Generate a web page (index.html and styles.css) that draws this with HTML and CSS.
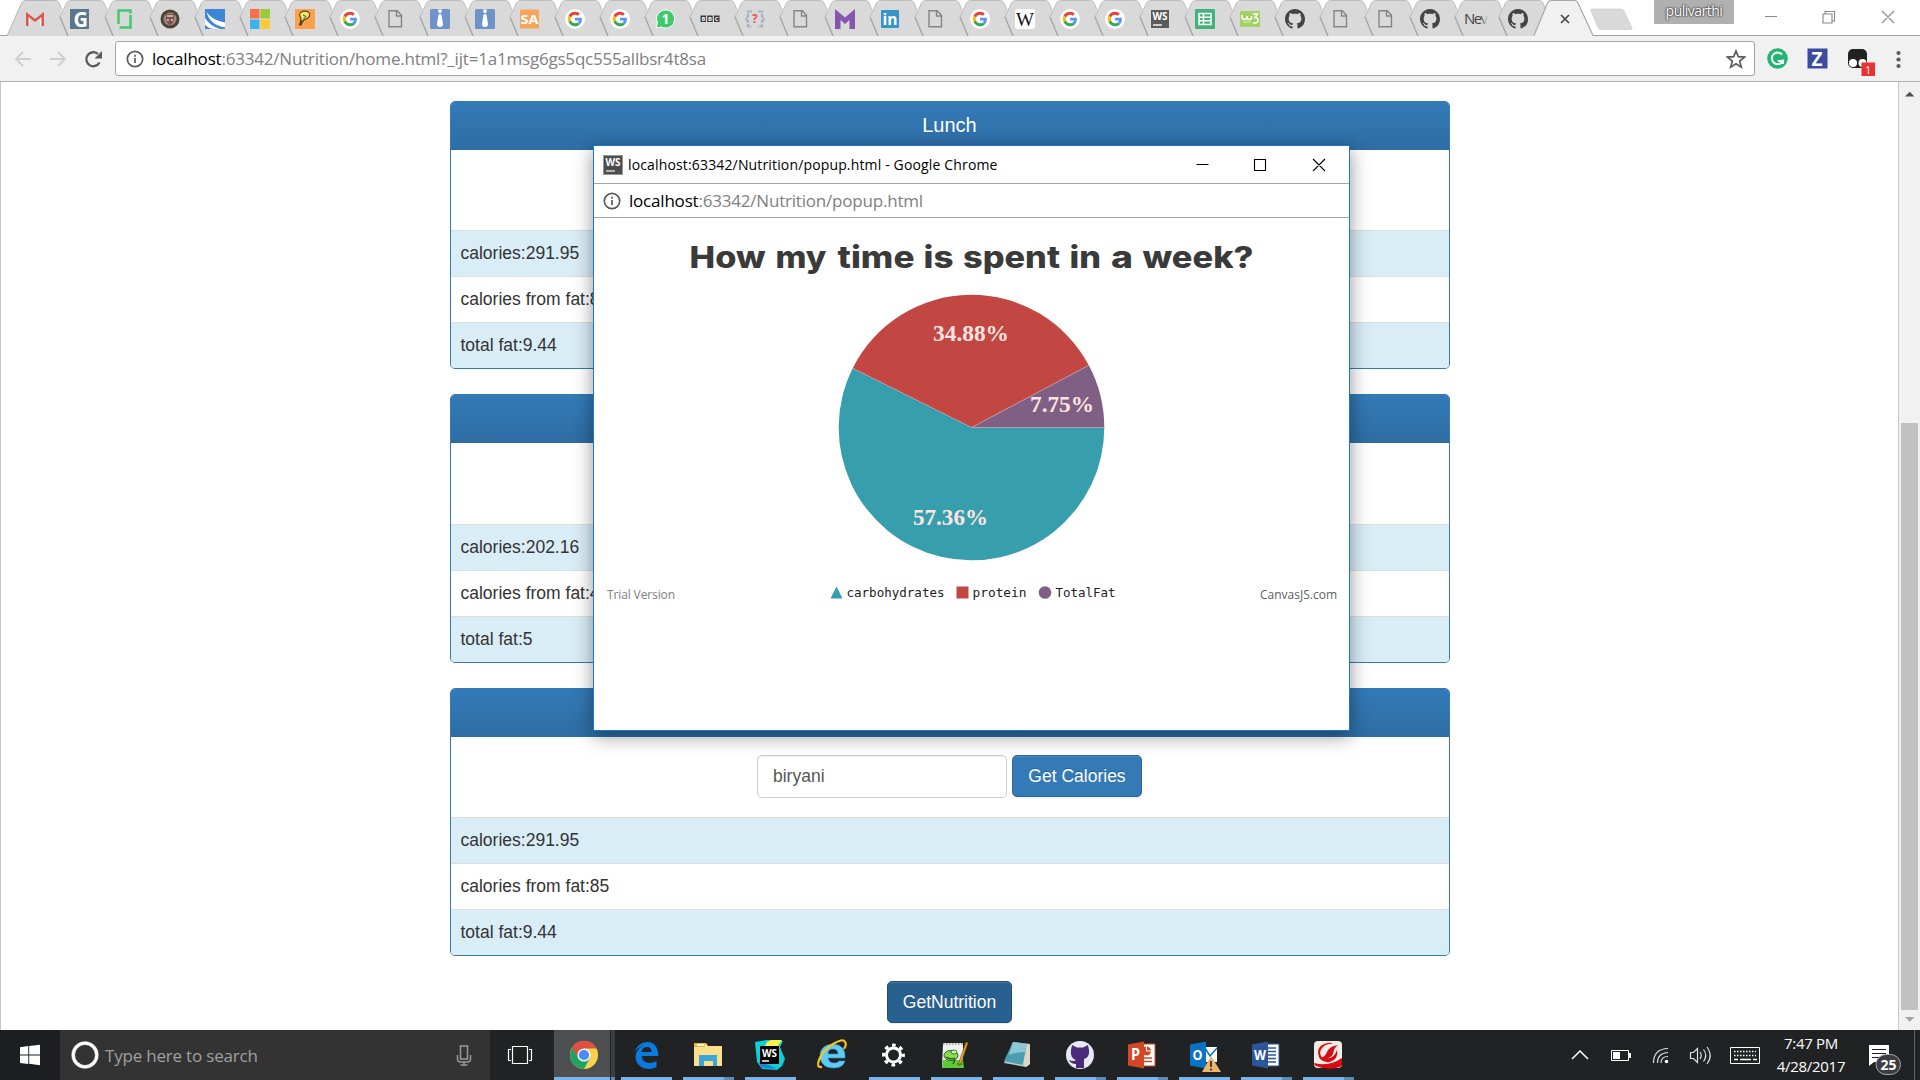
FILE: index.html
```html
<!DOCTYPE html>
<html lang="en">
<head>
<meta charset="utf-8">
<title>Nutrition</title>
<link rel="stylesheet" href="styles.css">
</head>
<body>
<svg class="defs" aria-hidden="true">
  <symbol id="tab" viewBox="0 0 62 36"><path d="M16 36 8 17 14.500 3Q16 .5 18.500.5H48.500Q51 .5 52 3L67 37" fill="#d9d9d9"/><path d="M16 36 8 17" fill="none" stroke="#a3a3a3" stroke-width="1.300"/><path d="M8 17 14.500 3Q16 .5 18.500.5H48.500Q51 .5 52 3L55 10" fill="none" stroke="#bdbdbd"/></symbol>
  <symbol id="tab-first" viewBox="0 0 62 36"><path d="M0 36 14.500 3Q16 .5 18.500.5H48.500Q51 .5 52 3L62 36" fill="#d9d9d9"/><path d="M0 36 14.500 3Q16 .5 18.500.5H48.500Q51 .5 52 3L55 10" fill="none" stroke="#b5b5b5"/></symbol>
  <symbol id="google" viewBox="0 0 20 20"><circle cx="10" cy="10" r="10" fill="#fff"/><g transform="translate(2.800 2.800) scale(.3)"><path fill="#ea4335" d="M24 9.500c3.540 0 6.710 1.220 9.210 3.600l6.850-6.850C35.900 2.380 30.470 0 24 0 14.620 0 6.510 5.380 2.560 13.220l7.980 6.190C12.430 13.720 17.740 9.500 24 9.500z"/><path fill="#5a96f5" d="M46.980 24.550c0-1.570-.15-3.090-.38-4.550H24v9.020h12.940c-.58 2.960-2.260 5.480-4.780 7.180l7.730 6c4.510-4.180 7.090-10.360 7.090-17.650z"/><path fill="#fbbc05" d="M10.530 28.590c-.48-1.450-.76-2.990-.76-4.590s.27-3.140.76-4.590l-7.980-6.190C.92 16.460 0 20.120 0 24c0 3.880.92 7.540 2.560 10.780l7.970-6.190z"/><path fill="#34a853" d="M24 48c6.480 0 11.930-2.130 15.890-5.810l-7.730-6c-2.150 1.450-4.920 2.300-8.160 2.300-6.260 0-11.570-4.220-13.470-9.910l-7.980 6.190C6.510 42.620 14.620 48 24 48z"/></g></symbol>
  <symbol id="octocat" viewBox="0 0 16 16"><path d="M8 0C3.580 0 0 3.580 0 8c0 3.540 2.290 6.530 5.470 7.590.4.07.55-.17.55-.38 0-.19-.01-.82-.01-1.490-2.010.37-2.530-.49-2.690-.94-.09-.23-.48-.94-.82-1.130-.28-.15-.68-.52-.01-.53.63-.01 1.080.58 1.230.82.72 1.210 1.870.87 2.330.66.07-.52.28-.87.51-1.070-1.780-.2-3.640-.89-3.640-3.950 0-.87.31-1.590.82-2.150-.08-.2-.36-1.020.08-2.120 0 0 .67-.21 2.200.82.64-.18 1.320-.27 2-.27s1.360.09 2 .27c1.530-1.040 2.200-.82 2.200-.82.44 1.100.16 1.920.08 2.120.51.56.82 1.270.82 2.150 0 3.070-1.870 3.750-3.650 3.950.29.25.54.73.54 1.480 0 1.070-.01 1.930-.01 2.200 0 .21.15.46.55.38A8.010 8.010 0 0 0 16 8c0-4.420-3.580-8-8-8z" fill="#444"/></symbol>
  <symbol id="page" viewBox="0 0 20 20"><path d="M4 1.700h8.200l4.300 4.500v11.600H4zM11.500 2v5H16.500" fill="none" stroke="#858585" stroke-width="1.400"/></symbol>
  <symbol id="tie" viewBox="0 0 20 20"><rect width="20" height="20" rx="1.500" fill="#6f93c9"/><path d="M8 .5h4L11.200 4H8.800zM8.600 5.200h2.800L13 15q0 3-3 3t-3-3z" fill="#fff"/></symbol>
  <symbol id="info" viewBox="0 0 18 18"><circle cx="9" cy="9" r="7.700" fill="none" stroke="#5a5a5a" stroke-width="1.700"/><path d="M9 8v5M9 4.700v2" stroke="#5a5a5a" stroke-width="1.700"/></symbol>
</svg>

<header class="tabstrip">
  <div class="tabs">
    <svg class="tab"><use href="#tab-first" width="62" height="36"/><path d="M19 13.500v12h4v-8l5 4 5-4v8h4v-12l-9 7z" fill="#f7f7f7"/><path d="M20.300 26V14.500l7.700 6 7.700-6V26" fill="none" stroke="#dc564a" stroke-width="2.500"/></svg>
    <svg class="tab"><use href="#tab" width="62" height="36"/><rect x="18" y="9" width="19" height="20" fill="#5b778d"/><text x="21.500" y="26.500" class="logo" font-size="21" textLength="14.500" lengthAdjust="spacingAndGlyphs" fill="#fff">G</text></svg>
    <svg class="tab"><use href="#tab" width="62" height="36"/><path d="M27 10.500h-5.500V24M22.500 27.500h11V15M27 10.500h6.500v3" fill="none" stroke="#46c972" stroke-width="2.600"/></svg>
    <svg class="tab"><use href="#tab" width="62" height="36"/><circle cx="28" cy="19" r="9.500" fill="#4b4335"/><circle cx="28" cy="19" r="6.500" fill="#9b8c77"/><path d="M24 14h8v5q-1 5-4 6-3-1-4-6z" fill="#884b48"/><path d="M25 16h6M25 20h2m2 0h2" stroke="#c8d5de" stroke-width="1.500"/></svg>
    <svg class="tab"><use href="#tab" width="62" height="36"/><rect x="18" y="9" width="20" height="20" fill="#3c86d6"/><path d="M19.500 12q6 8.500 18.500 10.500v5Q23 25 19.500 12zM18 18q5 8 15 11H26q-5-1-8-4z" fill="#fff"/></svg>
    <svg class="tab"><use href="#tab" width="62" height="36"/><path d="M18 9h9.500v9.500H18z" fill="#f8704b"/><path d="M28.500 9H38v9.500h-9.500z" fill="#9ac93a"/><path d="M18 19.500h9.500V29H18z" fill="#3ab4ef"/><path d="M28.500 19.500H38V29h-9.500z" fill="#fdc934"/></svg>
    <svg class="tab"><use href="#tab" width="62" height="36"/><rect x="18" y="9" width="20" height="20" fill="#faa14a"/><path d="M23.500 12.500q4-2.500 8-.5 2.500 3-.5 6l-4 2-1 1.500-2.500-1.500.5-2q-2.500-3-.5-5.500z" fill="#f5e769" stroke="#4d4128" stroke-width="1.100"/><path d="m26 15 3 1.500-3 3" fill="none" stroke="#4d4128"/><path d="m23.200 20.500 2.800 1.500-2 4-2-1z" fill="#4d4128"/></svg>
    <svg class="tab"><use href="#tab" width="62" height="36"/><use href="#google" x="18" y="9" width="20" height="20"/></svg>
    <svg class="tab"><use href="#tab" width="62" height="36"/><use href="#page" x="18" y="9" width="20" height="20"/></svg>
    <svg class="tab"><use href="#tab" width="62" height="36"/><use href="#tie" x="18" y="9" width="20" height="20"/></svg>
    <svg class="tab"><use href="#tab" width="62" height="36"/><use href="#tie" x="18" y="9" width="20" height="20"/></svg>
    <svg class="tab"><use href="#tab" width="62" height="36"/><rect x="18" y="9.500" width="19" height="19" fill="#f6a65c"/><text x="18.500" y="24" class="logo" font-size="13" textLength="18" lengthAdjust="spacingAndGlyphs" fill="#fff">SA</text></svg>
    <svg class="tab"><use href="#tab" width="62" height="36"/><use href="#google" x="18" y="9" width="20" height="20"/></svg>
    <svg class="tab"><use href="#tab" width="62" height="36"/><use href="#google" x="18" y="9" width="20" height="20"/></svg>
    <svg class="tab"><use href="#tab" width="62" height="36"/><path d="M28.500 10a9 9 0 1 1-4 17l-5.500 1 1.500-5a9 9 0 0 1 8-13z" fill="#3dcb67" stroke="#fff"/><text x="24.500" y="24" class="logo" font-size="14" fill="#fff">1</text></svg>
    <svg class="tab"><use href="#tab" width="62" height="36"/><path d="M18.500 15.500h5.500v6.500h-5.500zM25.200 15.500h5.500v6.500h-5.500zM32 15.500h5.500v6.500H32z" fill="#383838"/><text x="19.500" y="21" font-size="6" textLength="17" class="logo" fill="#fff">BBC</text></svg>
    <svg class="tab"><use href="#tab" width="62" height="36"/><path d="M25 11.500h-4v5l-2 2.500 2 2.500v5h4M31 11.500h4v5l2 2.500-2 2.500v5h-4" fill="none" stroke="#a6b3c1" stroke-width="2.200" stroke-dasharray="5 1"/><text x="25" y="23" font-size="12" class="logo" fill="#f05050">?</text></svg>
    <svg class="tab"><use href="#tab" width="62" height="36"/><use href="#page" x="18" y="9" width="20" height="20"/></svg>
    <svg class="tab"><use href="#tab" width="62" height="36"/><path d="m18 9 10 8.500L38 9v20h-5.500V20L28 24l-4.500-4v9H18z" fill="#8655ad"/></svg>
    <svg class="tab"><use href="#tab" width="62" height="36"/><rect x="19" y="10" width="18" height="18" rx="1" fill="#3595c8"/><text x="20.500" y="25" font-size="16" class="logo" textLength="15" lengthAdjust="spacingAndGlyphs" fill="#fff">in</text></svg>
    <svg class="tab"><use href="#tab" width="62" height="36"/><use href="#page" x="18" y="9" width="20" height="20"/></svg>
    <svg class="tab"><use href="#tab" width="62" height="36"/><use href="#google" x="18" y="9" width="20" height="20"/></svg>
    <svg class="tab"><use href="#tab" width="62" height="36"/><rect x="18" y="9" width="20" height="20" rx="3" fill="#fff"/><text x="19" y="25.500" font-family="Liberation Serif, serif" font-size="18" textLength="18" lengthAdjust="spacingAndGlyphs" fill="#111">W</text></svg>
    <svg class="tab"><use href="#tab" width="62" height="36"/><use href="#google" x="18" y="9" width="20" height="20"/></svg>
    <svg class="tab"><use href="#tab" width="62" height="36"/><use href="#google" x="18" y="9" width="20" height="20"/></svg>
    <svg class="tab"><use href="#tab" width="62" height="36"/><rect x="19" y="10" width="18" height="18" fill="#5b5b5b"/><text x="20.500" y="20" textLength="15" lengthAdjust="spacingAndGlyphs" class="logo" font-size="11" fill="#fff">WS</text><path d="M21 25h9" stroke="#fff" stroke-width="1.400"/></svg>
    <svg class="tab"><use href="#tab" width="62" height="36"/><rect x="18" y="9" width="20" height="20" rx="1" fill="#42b27c"/><path d="M22 13.500h12v11H22zM22 17.200h12M22 20.800h12M26.500 13.500v11" fill="none" stroke="#fff" stroke-width="1.500"/></svg>
    <svg class="tab"><use href="#tab" width="62" height="36"/><rect x="18" y="11" width="20" height="16" rx="1" fill="#a2d263"/><path d="M20 15v2q0 2.500 2.500 2.500T25 17v-1 1q0 2.500 2.500 2.500T29.500 16M31 14h4.500l-2.500 3.500q3 0 3 3t-5 2.500" fill="none" stroke="#fff" stroke-width="1.500"/><path d="M21 22h8" stroke="#d8efbc"/></svg>
    <svg class="tab"><use href="#tab" width="62" height="36"/><use href="#octocat" x="18" y="9" width="20" height="20"/></svg>
    <svg class="tab"><use href="#tab" width="62" height="36"/><use href="#page" x="18" y="9" width="20" height="20"/></svg>
    <svg class="tab"><use href="#tab" width="62" height="36"/><use href="#page" x="18" y="9" width="20" height="20"/></svg>
    <svg class="tab"><use href="#tab" width="62" height="36"/><use href="#octocat" x="18" y="9" width="20" height="20"/></svg>
    <svg class="tab narrow"><linearGradient id="fade"><stop offset=".65" stop-color="#444"/><stop offset="1" stop-color="#444" stop-opacity="0"/></linearGradient><use href="#tab" width="62" height="36"/><text x="17" y="24" class="ui" font-size="15" textLength="24" fill="url(#fade)">Nev</text></svg>
    <svg class="tab narrow"><use href="#tab" width="62" height="36"/><use href="#octocat" x="17" y="9" width="20" height="20"/></svg>
    <svg class="tab active"><path d="M0 36 13.500 3Q15 .5 17 .5H40Q43 .5 44 3L59 36" fill="#f1f1f1"/><path d="M0 35.500 13.500 3Q15 .5 17 .5H40Q43 .5 44 3L59 35.500" fill="none" stroke="#a8a8a8" stroke-width="1.200"/><path d="m27 15 8 8m0-8-8 8" stroke="#444" stroke-width="1.700"/></svg>
    <svg class="newtab"><path d="M1 9h28q3 0 4 2l8 17q.5 1.500-1.500 1.500H11q-3 0-4-2L0 11Q-.5 9 1 9z" fill="#d9d9d9" stroke="#ccc" stroke-width=".7"/></svg>
  </div>
  <div class="profile">pulivarthi</div>
  <svg class="winctl" width="186" height="36"><path d="M31 16.500h12M89 14h9v9h-9zM91 14v-2.500h9.500V21H98M148 11l12 12m0-12-12 12" fill="none" stroke="#888" stroke-width="1.100"/></svg>
</header>

<nav class="toolbar">
  <svg class="navicons" width="115" height="45"><path d="M31 23H16m7-7-7 7 7 7M50 23h15m-7-7 7 7-7 7" fill="none" stroke="#cfcfcf" stroke-width="1.900"/><path d="M99.500 26.500a7 7 0 1 1-1.500-8.500" fill="none" stroke="#5a5a5a" stroke-width="2.300"/><path d="M102 15v7.500h-7.500z" fill="#5a5a5a"/></svg>
  <div class="omnibox">
    <svg width="18" height="18"><use href="#info"/></svg>
    <span class="address">localhost<i>:63342/Nutrition/home.html?_ijt=1a1msg6gs5qc555allbsr4t8sa</i></span>
    <svg width="20" height="20"><path d="m10 2 2.300 5.700 6.200.4-4.800 4 1.600 6-5.300-3.400-5.300 3.400 1.600-6-4.800-4 6.200-.4z" fill="none" stroke="#5a5a5a" stroke-width="1.700"/></svg>
  </div>
  <svg class="extensions" width="165" height="45"><circle cx="22.500" cy="22.500" r="10.300" fill="#23b574"/><path d="M27 18.500a5.800 5.800 0 1 0 .8 6.500h-5m5.200-1.500V28" fill="none" stroke="#fff" stroke-width="1.900"/><rect x="52.500" y="12.500" width="20" height="20" fill="#3c4b9e"/><text x="56.500" y="29.500" class="logo" font-size="19" fill="#fff">Z</text><rect x="93" y="13" width="19" height="19" rx="5" fill="#222"/><circle cx="98" cy="27" r="4" fill="#fff"/><circle cx="107.500" cy="27" r="4" fill="#fff"/><rect x="106.500" y="26.500" width="13.500" height="13.500" fill="#ee3030"/><text x="110" y="38" font-size="11" class="ui" fill="#fff">1</text><g fill="#5a5a5a"><circle cx="143.500" cy="17" r="2.100"/><circle cx="143.500" cy="23.500" r="2.100"/><circle cx="143.500" cy="30" r="2.100"/></g></svg>
</nav>

<div class="viewport">
  <main class="page">
    <section class="panel">
      <h3 class="panel-heading">Lunch</h3>
      <div class="panel-body"></div>
      <ul class="facts"><li>calories:291.95</li><li>calories from fat:85</li><li>total fat:9.44</li></ul>
    </section>
    <section class="panel panel-tall">
      <h3 class="panel-heading"></h3>
      <div class="panel-body"></div>
      <ul class="facts"><li>calories:202.16</li><li>calories from fat:45</li><li>total fat:5</li></ul>
    </section>
    <section class="panel">
      <h3 class="panel-heading"></h3>
      <div class="panel-body"><input class="food" type="text" value="biryani"><button class="btn">Get Calories</button></div>
      <ul class="facts"><li>calories:291.95</li><li>calories from fat:85</li><li>total fat:9.44</li></ul>
    </section>
    <button class="btn btn-active">GetNutrition</button>
  </main>
  <div class="scrollbar">
    <svg width="21" height="26"><path d="m6 14.500 4.700-4.800 4.700 4.800z" fill="#505050"/></svg>
    <div class="thumb"></div>
    <svg width="21" height="20"><path d="m6 7 4.700 4.800L15.400 7z" fill="#a3a3a3"/></svg>
  </div>
</div>

<footer class="taskbar">
  <svg class="start" width="60" height="50"><path d="m20 17.200 8.300-1.200v8.500H20zM29.200 15.900 40 14.800v9.700H29.200zM20 25.500h8.300V34L20 32.900zM29.200 25.500H40v9.800l-10.800-1.500z" fill="#fff"/></svg>
  <div class="search">
    <svg width="28" height="28"><circle cx="14" cy="14" r="11.800" fill="none" stroke="#aaa" stroke-width="3.800"/><circle cx="14" cy="14" r="11.800" fill="none" stroke="#fff" stroke-width="2.800"/></svg>
    <span class="hint">Type here to search</span>
    <svg width="16" height="22"><path d="M4.500 2h7v13h-7zM1.500 11v4q0 3 3 3h7q3 0 3-3v-4M8 18v3M4.500 21h7" fill="none" stroke="#999" stroke-width="1.500"/></svg>
  </div>
  <svg class="taskview" width="64" height="50"><path d="M22.500 16.500h15v17h-15zM21 19.500h-2.500v11H21M39 19.500h2.500v11H39" fill="none" stroke="#fff" stroke-width="1.200"/></svg>
  <div class="apps">
    <svg class="app current" viewBox="0 0 61 50"><path d="M0 0h56v50H0z" fill="#4d4f51"/><path d="M57 0h4v50h-4z" fill="#3b3d3f"/><path d="M0 47h56v3H0z" fill="#76b5ee"/><path d="M57 47h4v3h-4z" fill="#5b8dba"/><g transform="translate(30 25)"><circle r="14" fill="#fcd14e"/><path d="M0 0-12.100-7A14 14 0 0 0 0 14L6 3z" fill="#1da362"/><path d="M0-6.500H12.600A14 14 0 0 0-12.100-7L-5.500 3z" fill="#dd5144"/><circle r="6.600" fill="#f3f3f3"/><circle r="5.100" fill="#4c8bf5"/></g></svg>
    <svg class="app" viewBox="0 0 51 50"><path d="M1 24Q5 12 15 12T26 26H9q1 7 8 7 4 0 7-2v6q-4 2-8 2-12-1-13-12 0-8 8-11-8 2-10 8zM9 22h10q0-5-4.500-5T9 22z" transform="translate(11.500)" fill="#0a7bdc"/><path class="run" d="M0 47h51v3H0z"/></svg>
    <svg class="app" viewBox="0 0 51 50"><path d="M11 13h12l2 3h14v20H11z" fill="#fbdf8b"/><path d="M11 13h12l-2 4H11z" fill="#e8b43a"/><path d="M14 14.200h7v1.600h-7z" fill="#fff"/><path d="M16 25h18v11h-4v-5h-9v5h-5z" fill="#3aa7dc"/><path class="run" d="M0 47h41v3H0z"/><path class="more" d="M41 47h10v3H41z"/></svg>
    <svg class="app" viewBox="0 0 51 50"><path d="m10 12 12-2 16 1-3 6 5 12-3 7-5 4-15-1-5-7z" fill="#0ed0d8"/><path d="m22 12 4-2h11l-4 6H20z" fill="#f5f34b"/><path d="m14 32 10 3 8 4-16-1z" fill="#1886d0"/><path d="M15 16h19v18H15z" fill="#000"/><text x="17" y="26.500" class="logo" font-size="11" textLength="15" lengthAdjust="spacingAndGlyphs" fill="#fff">WS</text><path d="M17 31h7" stroke="#fff" stroke-width="1.500"/><path class="run" d="M0 47h51v3H0z"/></svg>
    <svg class="app" viewBox="0 0 51 50"><path d="M13 28q-1-13 13-14 13 1 12 14H21q1 5 6 5 4 0 5-2h6q-2 7-11 7-12 0-14-10zm8-4h10q0-5-5-5t-5 5z" fill="#5fcbf2" stroke="#2e9fd6" stroke-width=".6"/><path d="M15 37q-6 1-3-7Q16 20 26 14t12-2q2 2-1 7" fill="none" stroke="#f5c31c" stroke-width="2.200"/></svg>
    <svg class="app" viewBox="0 0 51 50"><circle cx="24.500" cy="25" r="7" fill="none" stroke="#fff" stroke-width="3"/><circle cx="24.500" cy="25" r="9.800" fill="none" stroke="#fff" stroke-width="3.200" stroke-dasharray="3.700 4" stroke-dashoffset="1.800"/><path class="run" d="M0 47h51v3H0z"/></svg>
    <svg class="app" viewBox="0 0 51 50"><path d="M12 13h20v25H11z" fill="#f0f0f0"/><path d="M12 30h20l1 8H11z" fill="#5bcb35"/><path d="M12 14h20" stroke="#aaa" stroke-width="2" stroke-dasharray="1.500"/><ellipse cx="20" cy="25.500" rx="7" ry="5" fill="#8ade4e" stroke="#2a5924"/><ellipse cx="23" cy="22" rx="3" ry="2" fill="#c8f5a0" stroke="#2a5924" stroke-width=".8"/><path d="M15 27q5 3 9 1M22 34l2-4m2 4h5" fill="none" stroke="#215217" stroke-width="1.200"/><path d="m37 13-7 20-2 3 0-4 7-20z" fill="#e8a72c" stroke="#7d431b" stroke-width=".6"/><path class="run" d="M0 47h51v3H0z"/></svg>
    <svg class="app" viewBox="0 0 51 50"><path d="m20 12 17 2v20l-4 3-22-4z" fill="#b6c9cf"/><path d="m20 12 14 2-4 21-19-4z" fill="#4b9db0"/><path d="m20 12 14 2-2 8q-9 0-16 3z" fill="#8cc7d3"/><path d="m34 14 3 1v19l-4 3-3-2z" fill="#dad7c4"/><path class="run" d="M0 47h51v3H0z"/></svg>
    <svg class="app" viewBox="0 0 51 50"><circle cx="25" cy="25" r="14" fill="#e6e9f3"/><path d="m17 15 5 2.500h6l5-2.500 1 5q1 7-5 9v9h-8v-4q-5 0-7-4 5 2 7 0-6-2-5-10z" fill="#4b2a7c"/><path class="run" d="M0 47h41v3H0z"/><path class="more" d="M41 47h10v3H41z"/></svg>
    <svg class="app" viewBox="0 0 51 50"><path d="M24 14h14v22H24z" fill="#fff" stroke="#d24726"/><circle cx="29.500" cy="21" r="4.500" fill="#d24726"/><path d="M29.500 21v-4.500M29.500 21h4.500" stroke="#fff"/><path d="M26 28h9M26 31.500h9" stroke="#d24726" stroke-width="1.500"/><path d="m11 14.500 16-3v27l-16-3z" fill="#d24726"/><text x="14" y="30" class="logo" font-size="16" textLength="9" lengthAdjust="spacingAndGlyphs" fill="#fff">P</text><path class="run" d="M0 47h41v3H0z"/><path class="more" d="M41 47h10v3H41z"/></svg>
    <svg class="app" viewBox="0 0 51 50"><path d="M25 17h13v15H25z" fill="#fff"/><path d="m26 18 5 8 7-8" fill="none" stroke="#0873c5" stroke-width="1.500"/><path d="m11 14.500 16-3v27l-16-3z" fill="#0873c5"/><text x="13.500" y="30" class="logo" font-size="15" textLength="10" lengthAdjust="spacingAndGlyphs" fill="#fff">O</text><path d="m32 26 10 16H23z" fill="#edb568"/><path d="M32 31v6m0 1.500v2" stroke="#444" stroke-width="2"/><path class="run" d="M0 47h51v3H0z"/></svg>
    <svg class="app" viewBox="0 0 51 50"><path d="M24 14h14v22H24z" fill="#fff" stroke="#2b579a"/><path d="M27 18h8M27 21.500h8M27 25h8M27 28.500h8M27 32h8" stroke="#2b579a" stroke-width="1.300"/><path d="m11 14.500 16-3v27l-16-3z" fill="#2b579a"/><text x="13" y="30" class="logo" font-size="14" textLength="12" lengthAdjust="spacingAndGlyphs" fill="#fff">W</text><path class="run" d="M0 47h41v3H0z"/><path class="more" d="M41 47h10v3H41z"/></svg>
    <svg class="app" viewBox="0 0 51 50"><rect x="11" y="11" width="28" height="27" rx="4" fill="#efede6"/><path d="M11 33q15 4 28-5v7q0 1-2 2-12 4-24-1-2-1-2-3z" fill="#d90b12"/><path d="M17 29Q12 19 20 14.500q6-3 10-1-9 0-12 6-2 4 1 8 3-1 4.500-4.500Q26 16 35 15q-4 3-4.500 7-1 5-6.500 6.500 7 0 10-8.500 2 9-7.500 12-5 1-9.500-3z" fill="#d90b12"/><path class="run" d="M0 47h41v3H0z"/><path class="more" d="M41 47h10v3H41z"/></svg>
  </div>
  <svg class="tray" width="204" height="50"><path d="m16 29 8-8 8 8" fill="none" stroke="#fff" stroke-width="1.500"/><path d="M55.500 20.500h17v10h-17z" fill="none" stroke="#fff"/><path d="M57 22h7v7h-7zM73 23h2v5h-2z" fill="#fff"/><g fill="none" stroke="#ddd" stroke-width="1.200"><path d="M97.500 33q0-14 14.500-14.500M101.500 33q0-10 10.500-10.500M105 33q0-6.500 7-6.500" /><path d="M134.500 22.500h3l4-4v14l-4-4h-3zM144 22q2.500 3.500 0 7M147.500 19.500q4.500 6 0 12M151 17q6.500 8.500 0 17"/></g><circle cx="110.500" cy="31.500" r="1.800" fill="#fff"/><path d="M174.500 17.500h29v16h-29z" fill="none" stroke="#fff"/><path d="M178 21.500h22M178 25.500h22" stroke="#fff" stroke-width="1.300" stroke-dasharray="1.500 1.500"/><path d="M178 29.500h4m2 0h11m2 0h4" stroke="#fff" stroke-width="1.300"/></svg>
  <div class="clock"><span>7:47 PM</span><span>4/28/2017</span></div>
  <svg class="notify" width="60" height="50"><path d="M9 15h20v17H14l-5 4z" fill="#fff"/><path d="M12 19.500h14M12 23.500h14M12 27.500h10" stroke="#222"/><rect x="16" y="24.500" width="24.500" height="20" rx="10" fill="#3c3d40" stroke="#aaa"/><text x="20.500" y="40" font-size="15" class="logo" textLength="16" lengthAdjust="spacingAndGlyphs" fill="#fff">25</text><path d="M54.500 0v50" stroke="#666"/></svg>
</footer>

<aside class="popup">
  <div class="popup-title">
    <svg width="20" height="20"><rect x=".5" y=".5" width="19" height="19" fill="#4d4d4d" stroke="#999"/><text x="2.500" y="11" textLength="15" lengthAdjust="spacingAndGlyphs" class="logo" font-size="11" fill="#fff">WS</text><path d="M3 16h9" stroke="#ddd" stroke-width="1.400"/></svg>
    <span class="popup-name">localhost:63342/Nutrition/popup.html - Google Chrome</span>
    <svg width="140" height="36"><path d="M.5 17.500h12M58.500 12.500h11v11h-11zM117 12l12 12m0-12-12 12" fill="none" stroke="#000" stroke-width="1.100"/></svg>
  </div>
  <div class="popup-url">
    <svg width="18" height="18"><use href="#info"/></svg>
    <span class="popup-address">localhost<i>:63342/Nutrition/popup.html</i></span>
  </div>
  <svg class="chart" viewBox="594 218 755 512" width="755" height="512">
    <g class="chart-title">
      <text x="689.500" y="267.500" textLength="76" lengthAdjust="spacingAndGlyphs">How</text>
      <text x="775.500" y="267.500" textLength="51" lengthAdjust="spacingAndGlyphs">my</text>
      <text x="837.500" y="267.500" textLength="77" lengthAdjust="spacingAndGlyphs">time</text>
      <text x="923.500" y="267.500" textLength="30" lengthAdjust="spacingAndGlyphs">is</text>
      <text x="963" y="267.500" textLength="97" lengthAdjust="spacingAndGlyphs">spent</text>
      <text x="1069.500" y="267.500" textLength="31.500" lengthAdjust="spacingAndGlyphs">in</text>
      <text x="1111" y="267.500" textLength="22" lengthAdjust="spacingAndGlyphs">a</text>
      <text x="1142.500" y="267.500" textLength="111" lengthAdjust="spacingAndGlyphs">week?</text>
    </g>
    <path d="M971.500 427.500h132.800A132.800 132.800 0 1 1 852.700 368.200z" fill="#369ead"/>
    <path d="M971.500 427.500 852.700 368.200A132.800 132.800 0 0 1 1088.800 365.300z" fill="#c24642"/>
    <path d="M971.500 427.500 1088.800 365.300A132.800 132.800 0 0 1 1104.300 427.500z" fill="#7f6084"/>
    <path d="M852.700 368.200 971.500 427.500 1088.800 365.300M971.500 427.500h132.800" fill="none" stroke="#c5a4b1" stroke-width=".7"/>
    <g class="slice">
      <text x="933" y="340.700" textLength="76" lengthAdjust="spacingAndGlyphs">34.88%</text>
      <text x="1030" y="411.700" textLength="64" lengthAdjust="spacingAndGlyphs">7.75%</text>
      <text x="913" y="524.700" textLength="75" lengthAdjust="spacingAndGlyphs">57.36%</text>
    </g>
    <path d="m836.500 586.500 6 12h-12z" fill="#369ead"/><path d="M956.500 586.500h12v12h-12z" fill="#c24642"/><circle cx="1045" cy="592.500" r="6.300" fill="#7f6084"/>
    <g class="legend">
      <text x="846.500" y="597" textLength="98" lengthAdjust="spacingAndGlyphs">carbohydrates</text>
      <text x="972.500" y="597" textLength="54" lengthAdjust="spacingAndGlyphs">protein</text>
      <text x="1055.500" y="597" textLength="60" lengthAdjust="spacingAndGlyphs">TotalFat</text>
    </g>
    <text x="607" y="599" textLength="68" class="ui" font-size="12" fill="#808080">Trial Version</text>
    <text x="1260" y="599" textLength="77" class="ui" font-size="12" fill="#606060">CanvasJS.com</text>
  </svg>
</aside>
</body>
</html>
```
FILE: styles.css
```css
* { box-sizing: border-box; }
body {
  margin: 0;
  width: 1920px;
  height: 1080px;
  overflow: hidden;
  display: flex;
  flex-direction: column;
  background: #fff;
  font-family: "Liberation Sans", Arial, sans-serif;
  color: #333;
}
svg { display: block; flex: none; }
i { font-style: normal; color: #808080; }
.defs { position: absolute; width: 0; height: 0; }
.ui { font-family: "Open Sans", "Noto Sans", sans-serif; }
.logo { font-family: "Open Sans", "Noto Sans", sans-serif; font-weight: 700; }

/* Tab strip */
.tabstrip {
  display: flex;
  height: 36px;
  flex: none;
  border-bottom: 1px solid #a0a0a0;
}
.tabs { display: flex; width: 1654px; padding-left: 7px; }
.tab { width: 45px; height: 36px; overflow: visible; }
.tab.narrow { width: 44px; }
.tab.active { width: 57px; margin-left: -1px; }
.newtab { width: 44px; height: 36px; overflow: visible; }
.profile {
  width: 80px;
  height: 24px;
  background: #b0b0b0;
  color: #fff;
  text-align: center;
  font: 14px/22px "Open Sans", sans-serif;
  letter-spacing: -.5px;
  text-shadow: 0 0 2px #222, 0 0 2px #222;
}

/* Toolbar */
.toolbar {
  display: flex;
  align-items: center;
  height: 46px;
  flex: none;
  background: #f1f1f1;
  border-bottom: 1px solid #b0b0b0;
}
.omnibox {
  display: flex;
  align-items: center;
  width: 1640px;
  height: 35px;
  padding: 0 8px 0 10px;
  background: #fff;
  border: 1px solid #a5a5a5;
  border-radius: 3px;
}
.address {
  flex: 1;
  padding-left: 8px;
  font: 17px/33px "Open Sans", sans-serif;
  letter-spacing: -.2px;
  color: #000;
  white-space: nowrap;
}

/* Page */
.viewport { display: flex; flex: 1; min-height: 0; border-left: 1px solid #c8c8c8; }
.page {
  flex: 1;
  display: flex;
  flex-direction: column;
  align-items: center;
  padding-top: 19px;
}
.panel {
  width: 1000px;
  height: 268px;
  flex: none;
  margin-bottom: 25px;
  border: 1px solid #337ab7;
  border-radius: 5px;
  overflow: hidden;
}
.panel-tall { height: 269px; }
.panel-tall .panel-body { height: 81px; }
.panel-heading {
  margin: 0;
  height: 48px;
  background: linear-gradient(#337ab7, #2e6da4);
  color: #fff;
  font-size: 20px;
  font-weight: 400;
  line-height: 47px;
  text-align: center;
}
.panel-body {
  display: flex;
  justify-content: center;
  gap: 5px;
  height: 80px;
  padding-top: 18px;
}
.facts { margin: 0; padding: 0; list-style: none; }
.facts li {
  height: 46px;
  padding-left: 10px;
  border-top: 1px solid #ddd;
  font-size: 17.500px;
  line-height: 44px;
}
.facts li:nth-child(odd) { background: #d9edf7; }
.food {
  width: 250px;
  height: 43px;
  padding: 0 15px;
  border: 1px solid #ccc;
  border-radius: 5px;
  box-shadow: inset 0 1px 1px rgba(0, 0, 0, .075);
  color: #555;
  font: 17.500px "Liberation Sans", Arial, sans-serif;
}
.btn {
  width: 130px;
  height: 42px;
  padding: 0;
  border: 1px solid #2b669a;
  border-radius: 5px;
  background: #337ab7;
  box-shadow: inset 0 1px 0 rgba(255, 255, 255, .15), 0 1px 1px rgba(0, 0, 0, .075);
  color: #fff;
  font: 17.500px "Liberation Sans", Arial, sans-serif;
  text-shadow: 0 -1px 0 rgba(0, 0, 0, .2);
}
.btn-active { width: 125px; background: #286090; border-color: #204d74; }
.scrollbar {
  display: flex;
  flex-direction: column;
  width: 22px;
  background: #f1f1f1;
  border-left: 1px solid #c8c8c8;
}
.thumb { width: 17px; height: 587px; margin: auto 0 0 2px; background: #c1c1c1; }

/* Taskbar */
.taskbar { display: flex; align-items: center; height: 50px; flex: none; background: #202224; color: #fff; }
.start { background: #1c1e21; }
.search {
  display: flex;
  align-items: center;
  width: 430px;
  height: 50px;
  padding: 0 18px 0 11px;
  background: #333;
}
.hint { flex: 1; padding-left: 6px; font: 17px "Open Sans", sans-serif; letter-spacing: -.2px; color: #a0a0a0; }
.apps { display: flex; gap: 11px; width: 1002px; }
.app { width: 51px; height: 50px; }
.current { width: 61px; margin-right: -5px; }
.run { fill: #76b5ee; }
.more { fill: #5b8dba; }
.clock {
  display: flex;
  flex-direction: column;
  width: 102px;
  margin-right: -2px;
  align-items: center;
  font: 15px/23px "Open Sans", sans-serif;
  letter-spacing: -.3px;
}

/* Popup window floating over the page */
.popup {
  position: absolute;
  left: 593px;
  top: 145px;
  width: 757px;
  height: 586px;
  border: 1px solid #1979ca;
  background: #fff;
  box-shadow: 0 5px 18px rgba(0, 0, 0, .42);
}
.popup-title {
  display: flex;
  align-items: center;
  height: 38px;
  padding-left: 9px;
  border-bottom: 1px solid #a5a5a5;
}
.popup-name {
  width: 573px;
  padding-left: 5px;
  font: 14px "Open Sans", sans-serif;
  letter-spacing: .15px;
  color: #000;
  white-space: nowrap;
}
.popup-url {
  display: flex;
  align-items: center;
  height: 34px;
  padding-left: 9px;
  border-bottom: 1px solid #a5a5a5;
}
.popup-address { padding-left: 8px; font: 17px "Open Sans", sans-serif; letter-spacing: -.2px; color: #000; }
.chart-title { font-family: Inter, "Open Sans", sans-serif; font-weight: 800; font-size: 30px; fill: #3a3a3a; }
.slice { font-family: "Liberation Serif", serif; font-weight: 700; font-size: 23px; fill: #ffe4e1; }
.legend { font-family: "DejaVu Sans Mono", monospace; font-size: 12.500px; fill: #222; }
```
